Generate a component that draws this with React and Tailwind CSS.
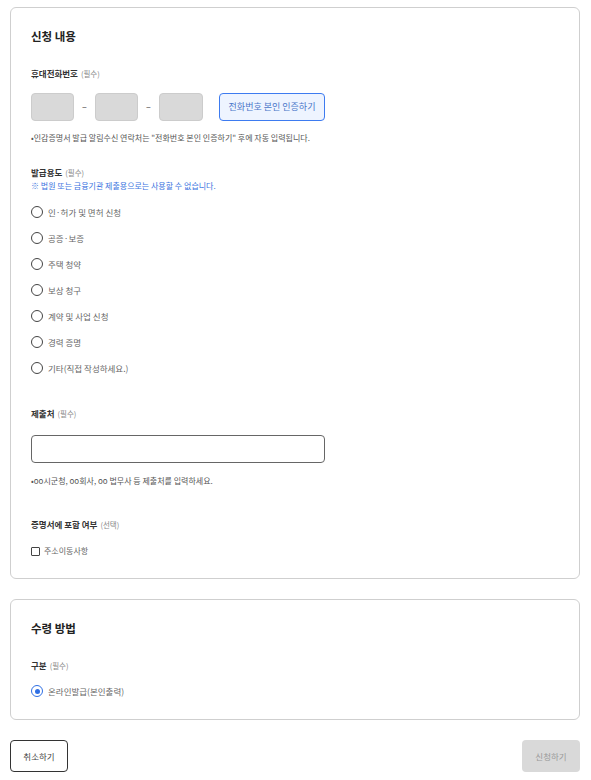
import React from 'react';

const font = { fontFamily: '"Noto Sans CJK KR", "Noto Sans", sans-serif' };

const Label = ({ children, sub }) => (
  <div className="flex items-baseline gap-[3px] h-[12px] leading-[12px]">
    <span className="text-[8.5px] font-bold text-[#333]">{children}</span>
    <span className="text-[7.5px] text-[#888]">{sub}</span>
  </div>
);

const Radio = ({ label, checked }) => (
  <label className="flex items-center gap-[5px] h-[14px]">
    {checked ? (
      <span className="w-[12px] h-[12px] rounded-full border-[1.5px] border-[#2f6fe4] flex items-center justify-center">
        <span className="w-[5px] h-[5px] rounded-full bg-[#2f6fe4]" />
      </span>
    ) : (
      <span className="w-[12px] h-[12px] rounded-full border border-[#444]" />
    )}
    <span className="text-[8.5px] text-[#666] leading-[14px]">{label}</span>
  </label>
);

const usages = [
  '인·허가 및 면허 신청',
  '공증·보증',
  '주택 청약',
  '보상 청구',
  '계약 및 사업 신청',
  '경력 증명',
  '기타(직접 작성하세요.)',
];

export default function App() {
  return (
    <div className="w-[591px] pl-[10px] pr-[11px] pt-[7px] bg-white" style={font}>
      {/* 신청 내용 */}
      <section className="border border-[#cfcfcf] rounded-[6px] px-[20px] pt-[20px] pb-[20px]">
        <h2 className="text-[11.5px] font-bold text-[#222] leading-[16px]">신청 내용</h2>

        <div className="mt-[23px]">
          <Label sub="(필수)">휴대전화번호</Label>
        </div>
        <div className="mt-[14px] flex items-center">
          <div className="w-[43px] h-[28px] rounded-[4px] bg-[#d9d9d9] border border-[#cccccc]" />
          <span className="w-[21px] text-center text-[9px] text-[#444]">–</span>
          <div className="w-[43px] h-[28px] rounded-[4px] bg-[#d9d9d9] border border-[#cccccc]" />
          <span className="w-[21px] text-center text-[9px] text-[#444]">–</span>
          <div className="w-[44px] h-[28px] rounded-[4px] bg-[#d9d9d9] border border-[#cccccc]" />
          <button className="ml-[16px] w-[106px] h-[28px] rounded-[4px] bg-[#eef4ff] border border-[#3d7bf0] text-[9px] text-[#4a76c9]">
            전화번호 본인 인증하기
          </button>
        </div>
        <p className="mt-[12px] text-[8px] leading-[10px] text-[#555]">
          •인감증명서 발급 알림수신 연락처는 "전화번호 본인 인증하기" 후에 자동 입력됩니다.
        </p>

        <div className="mt-[23px]">
          <Label sub="(필수)">발급용도</Label>
        </div>
        <p className="mt-[3px] text-[8px] leading-[10px] text-[#3b74e0]">
          ※ 법원 또는 금융기관 제출용으로는 사용할 수 없습니다.
        </p>
        <div className="mt-[14px] flex flex-col gap-[12px]">
          {usages.map((u) => (
            <Radio key={u} label={u} />
          ))}
        </div>

        <div className="mt-[32px]">
          <Label sub="(필수)">제출처</Label>
        </div>
        <div className="mt-[16px] w-[294px] h-[28px] rounded-[4px] border border-[#666]" />
        <p className="mt-[13px] text-[8px] leading-[10px] text-[#555]">
          •oo시군청, oo회사, oo 법무사 등 제출처를 입력하세요.
        </p>

        <div className="mt-[32px]">
          <Label sub="(선택)">증명서에 포함 여부</Label>
        </div>
        <label className="mt-[14px] flex items-center gap-[4px] h-[14px]">
          <span className="w-[9px] h-[9px] rounded-[1px] border border-[#444]" />
          <span className="text-[8px] text-[#666]">주소이동사항</span>
        </label>
      </section>

      {/* 수령 방법 */}
      <section className="mt-[20px] border border-[#cfcfcf] rounded-[6px] px-[20px] pt-[20px] pb-[21px]">
        <h2 className="text-[11.5px] font-bold text-[#222] leading-[16px]">수령 방법</h2>
        <div className="mt-[23px]">
          <Label sub="(필수)">구분</Label>
        </div>
        <div className="mt-[13px]">
          <Radio label="온라인발급(본인출력)" checked />
        </div>
      </section>

      <div className="mt-[20px] flex justify-between">
        <button className="w-[58px] h-[32px] rounded-[4px] border border-[#333] text-[8.5px] text-[#444] bg-white">
          취소하기
        </button>
        <button className="w-[58px] h-[32px] rounded-[4px] bg-[#d9d9d9] text-[8.5px] text-[#999]">
          신청하기
        </button>
      </div>
    </div>
  );
}
